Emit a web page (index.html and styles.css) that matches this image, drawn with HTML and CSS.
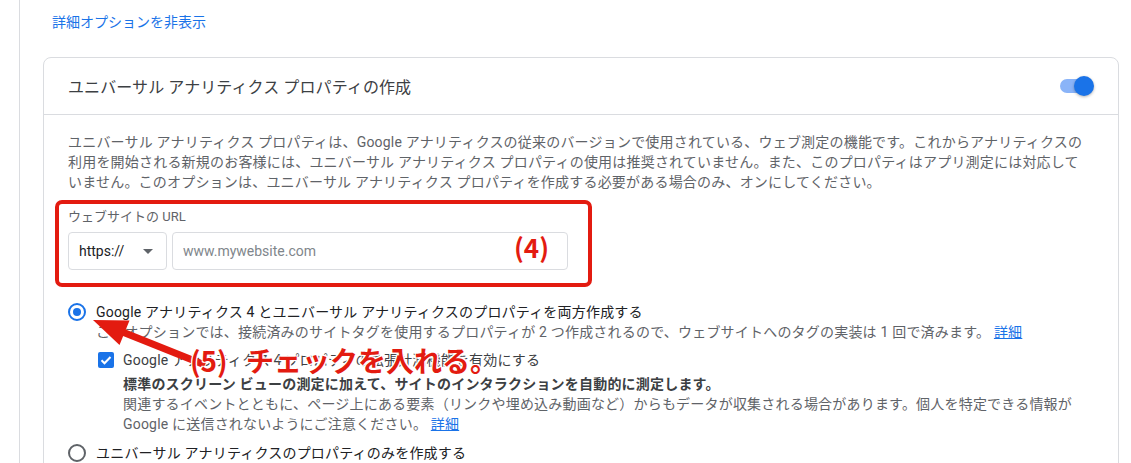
FILE: index.html
```html
<!DOCTYPE html>
<html lang="ja">
<head>
    <meta charset="UTF-8">
    <meta name="viewport" content="width=device-width, initial-scale=1.0">
    <title>プロパティの作成 | Google アナリティクス</title>
    <link rel="stylesheet" href="styles.css">
</head>
<body>

    <div class="page">
        <a href="#" class="advanced-toggle">詳細オプションを非表示</a>

        <section class="ua-card">
            <div class="ua-card-header">
                <h2 class="ua-card-title">ユニバーサル アナリティクス プロパティの作成</h2>
                <span class="switch is-on">
                    <span class="switch-track"></span>
                    <span class="switch-thumb"></span>
                </span>
            </div>

            <div class="ua-card-body">
                <p class="ua-desc">
                    ユニバーサル アナリティクス プロパティは、Google アナリティクスの従来のバージョンで使用されている、ウェブ測定の機能です。これからアナリティクスの<br>利用を開始される新規のお客様には、ユニバーサル アナリティクス プロパティの使用は推奨されていません。また、このプロパティはアプリ測定には対応して<br>いません。このオプションは、ユニバーサル アナリティクス プロパティを作成する必要がある場合のみ、オンにしてください。
                </p>

                <!-- Website URL -->
                <div class="url-field">
                    <label class="url-label" for="url-host">ウェブサイトの URL</label>
                    <div class="url-inputs">
                        <div class="url-protocol">
                            <span>https://</span>
                            <span class="caret"></span>
                        </div>
                        <input id="url-host" class="url-host" type="text" placeholder="www.mywebsite.com">
                    </div>
                </div>

                <!-- Property options -->
                <div class="radio-group">
                    <div class="radio-option">
                        <span class="radio is-checked"></span>
                        <div class="radio-content">
                            <div class="radio-title">Google アナリティクス 4 とユニバーサル アナリティクスのプロパティを両方作成する</div>
                            <div class="radio-help">このオプションでは、接続済みのサイトタグを使用するプロパティが 2 つ作成されるので、ウェブサイトへのタグの実装は 1 回で済みます。 <a href="#" class="help-link">詳細</a></div>

                            <div class="check-option">
                                <span class="checkbox is-checked">
                                    <svg viewBox="0 0 16 16" width="16" height="16"><path d="M3.5 8.3l3 3 6-6.3" fill="none" stroke="#fff" stroke-width="2"/></svg>
                                </span>
                                <div class="check-content">
                                    <div class="check-title">Google アナリティクス 4 プロパティの拡張計測機能を有効にする</div>
                                    <div class="check-strong">標準のスクリーン ビューの測定に加えて、サイトのインタラクションを自動的に測定します。</div>
                                    <div class="check-help">関連するイベントとともに、ページ上にある要素（リンクや埋め込み動画など）からもデータが収集される場合があります。個人を特定できる情報が<br>Google に送信されないようにご注意ください。 <a href="#" class="help-link">詳細</a></div>
                                </div>
                            </div>
                        </div>
                    </div>

                    <div class="radio-option">
                        <span class="radio"></span>
                        <div class="radio-content">
                            <div class="radio-title">ユニバーサル アナリティクスのプロパティのみを作成する</div>
                        </div>
                    </div>
                </div>
            </div>
        </section>
    </div>

    <!-- Screenshot annotations (drawn over the page) -->
    <div class="annotations">
        <svg class="annotation-layer" width="1131" height="463" viewBox="0 0 1131 463">
            <rect x="57" y="202" width="533" height="83" rx="5" fill="none" stroke="#e31b10" stroke-width="4"/>
            <line x1="120" y1="331" x2="205" y2="365" stroke="#e31b10" stroke-width="7"/>
            <polygon points="93,320 129.5,320.5 119.5,345" fill="#e31b10"/>
        </svg>
        <span class="note note-url">(4)</span>
        <span class="note note-check">(5) チェックを入れる。</span>
    </div>

</body>
</html>
```

FILE: styles.css
```css
:root {
    --text-dark: #202124;
    --text-main: #3c4043;
    --text-muted: #5f6368;
    --blue: #1a73e8;
    --blue-light: #8ab4f8;
    --border-color: #dadce0;
    --note-red: #e31b10;
    --font: 'Roboto', 'Noto Sans CJK JP', sans-serif;
}
body {
    margin: 0;
    background: #ffffff;
    font-family: var(--font);
    font-size: 14px;
    color: var(--text-main);
}
.page {
    margin-left: 19px;
    border-left: 1px solid var(--border-color);
    padding: 12px 12px 0 23px;
    min-height: 100vh;
    box-sizing: border-box;
}
.advanced-toggle {
    display: block;
    margin-left: 9px;
    line-height: 20px;
    color: var(--blue);
    text-decoration: none;
}

/* Card */
.ua-card {
    margin-top: 25px;
    border: 1px solid var(--border-color);
    border-radius: 8px;
    min-height: 420px;
}
.ua-card-header {
    display: flex;
    align-items: center;
    justify-content: space-between;
    height: 56px;
    padding: 0 24px;
    border-bottom: 1px solid var(--border-color);
}
.ua-card-title {
    margin: 0;
    font-size: 16px;
    font-weight: 400;
    letter-spacing: 0.1px;
    color: var(--text-main);
}
.switch {
    position: relative;
    width: 34px;
    height: 20px;
}
.switch-track {
    position: absolute; left: 0; top: 3px;
    width: 32px; height: 14px;
    border-radius: 7px;
    background: var(--blue-light);
}
.switch-thumb {
    position: absolute; right: 0; top: 0;
    width: 20px; height: 20px;
    border-radius: 50%;
    background: var(--blue);
    box-shadow: 0 1px 3px rgba(0, 0, 0, 0.3);
}
.ua-card-body {
    padding: 17px 24px 0;
    letter-spacing: 0.2px;
}
.ua-desc {
    margin: 0;
    line-height: 20px;
    color: var(--text-muted);
}

/* URL field */
.url-field {
    margin-top: 17px;
    letter-spacing: 0;
}
.url-label {
    display: block;
    font-size: 13px;
    line-height: 16px;
    color: var(--text-muted);
}
.url-inputs {
    display: flex;
    gap: 5px;
    margin-top: 7px;
}
.url-protocol {
    display: flex;
    align-items: center;
    justify-content: space-between;
    width: 99px;
    height: 38px;
    box-sizing: border-box;
    padding: 0 13px 0 10px;
    border: 1px solid var(--border-color);
    border-radius: 4px;
    color: var(--text-dark);
}
.caret {
    width: 0; height: 0;
    border-left: 5px solid transparent;
    border-right: 5px solid transparent;
    border-top: 5px solid var(--text-muted);
}
.url-host {
    width: 396px;
    height: 38px;
    box-sizing: border-box;
    padding: 0 10px;
    border: 1px solid var(--border-color);
    border-radius: 4px;
    font-family: var(--font);
    font-size: 14px;
    color: var(--text-dark);
}
.url-host::placeholder { color: #80868b; }

/* Radio + checkbox options */
.radio-group {
    margin-top: 32px;
}
.radio-option {
    display: flex;
    align-items: flex-start;
    gap: 10px;
}
.radio-option + .radio-option { margin-top: 9px; }
.radio {
    flex: none;
    width: 18px; height: 18px;
    margin-top: 1px;
    box-sizing: border-box;
    border: 2px solid var(--text-muted);
    border-radius: 50%;
    display: flex;
    align-items: center;
    justify-content: center;
}
.radio.is-checked { border-color: var(--blue); }
.radio.is-checked::after {
    content: '';
    width: 8px; height: 8px;
    border-radius: 50%;
    background: var(--blue);
}
.radio-title {
    line-height: 20px;
    color: var(--text-dark);
}
.radio-help {
    line-height: 20px;
    color: var(--text-muted);
}
.help-link {
    color: var(--blue);
    text-decoration: underline;
}
.check-option {
    display: flex;
    align-items: flex-start;
    gap: 9px;
    margin-top: 8px;
}
.checkbox {
    flex: none;
    width: 16px; height: 16px;
    margin: 2px 0 0 2px;
    border-radius: 2px;
    background: var(--blue);
    display: flex;
}
.check-title {
    line-height: 20px;
    color: var(--text-main);
}
.check-strong {
    margin-top: 4px;
    line-height: 20px;
    font-weight: 700;
    color: var(--text-main);
}
.check-help {
    line-height: 20px;
    color: var(--text-muted);
}

/* Annotations */
.annotations {
    position: absolute;
    top: 0; left: 0;
    width: 1131px; height: 463px;
    pointer-events: none;
}
.annotation-layer {
    position: absolute;
    top: 0; left: 0;
}
.note {
    position: absolute;
    font-family: 'Noto Sans CJK JP', sans-serif;
    font-weight: 700;
    color: var(--note-red);
    white-space: nowrap;
}
.note-url {
    left: 514px; top: 231px;
    font-size: 26px;
    line-height: 32px;
}
.note-check {
    left: 190px; top: 342px;
    font-size: 28px;
    line-height: 36px;
    word-spacing: 12px;
    text-shadow: 1px 1px 0 #fff, -1px -1px 0 #fff, 1px -1px 0 #fff, -1px 1px 0 #fff, 0 0 3px #fff;
}
```
